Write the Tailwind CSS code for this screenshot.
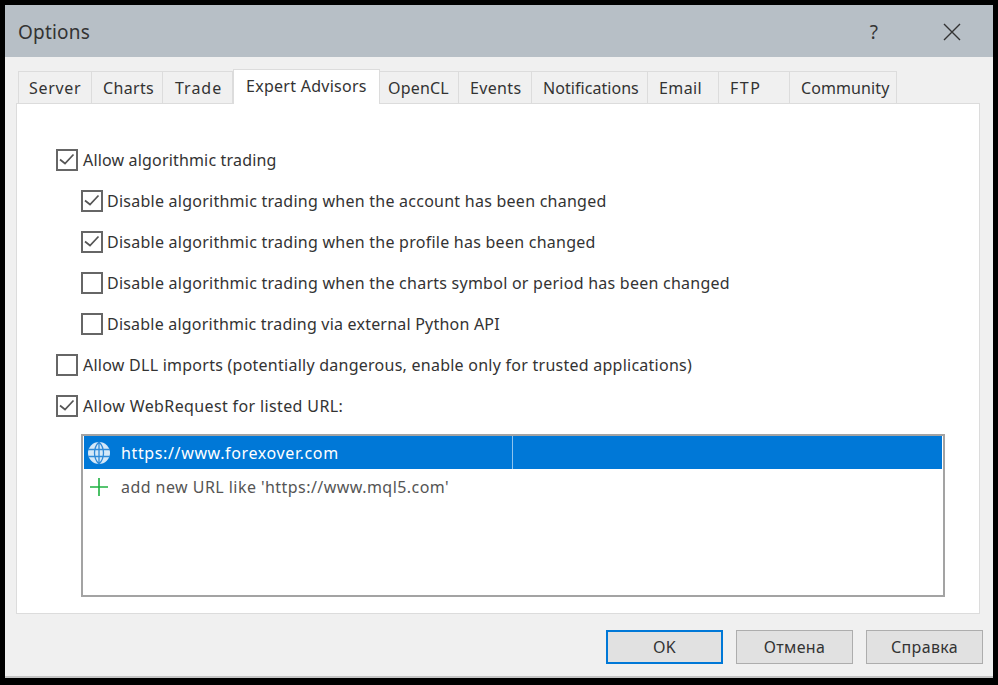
<!DOCTYPE html>
<html><head><meta charset="utf-8"><script src="https://cdn.jsdelivr.net/npm/@tailwindcss/browser@4"></script></head>
<body class="bg-black">
<div class="w-[998px] h-[685px] bg-black pt-[5px] pl-[5px] pr-[5px] pb-[7px] font-['Noto_Sans',sans-serif] text-[16px] leading-[22px] text-[#333] overflow-hidden">
  <div class="w-[988px] h-[673px] bg-[#f0f0f0] border-b-2 border-[#c4c4c4] flex flex-col">
    <div class="h-[52px] shrink-0 bg-[#b7bfc6] flex items-center pl-[13px] pt-[2px] text-[19px] text-[#333] tracking-[0.2px]">
      <span class="grow">Options</span>
      <span class="w-[14px] text-center text-[19px] mr-[62px]">?</span>
      <svg class="mr-[32px]" width="18" height="18" viewBox="0 0 18 18"><path d="M1 1L17 17M17 1L1 17" stroke="#333" stroke-width="1.4" fill="none"/></svg>
    </div>
    <div class="h-[46px] shrink-0 flex items-end pl-[13px] relative z-10">
      <div class="w-[74px] h-[32px] bg-[#f0f0f0] border border-b-0 border-[#dcdcdc] flex items-center pl-[10px] tracking-[0.7px]">Server</div>
      <div class="w-[71px] h-[32px] bg-[#f0f0f0] border border-b-0 border-l-0 border-[#dcdcdc] flex items-center pl-[11px] tracking-[0.35px]">Charts</div>
      <div class="w-[70px] h-[32px] bg-[#f0f0f0] border border-b-0 border-l-0 border-[#dcdcdc] flex items-center pl-[12px] tracking-[1px]">Trade</div>
      <div class="w-[147px] h-[35px] -mb-px bg-white border border-b-0 border-[#dcdcdc] flex items-start pt-[5px] pl-[12px] tracking-[0.27px]">Expert Advisors</div>
      <div class="w-[79px] h-[32px] bg-[#f0f0f0] border border-b-0 border-l-0 border-[#dcdcdc] flex items-center pl-[8px] tracking-[0.2px]">OpenCL</div>
      <div class="w-[73px] h-[32px] bg-[#f0f0f0] border border-b-0 border-l-0 border-[#dcdcdc] flex items-center pl-[11px] tracking-[0.35px]">Events</div>
      <div class="w-[116px] h-[32px] bg-[#f0f0f0] border border-b-0 border-l-0 border-[#dcdcdc] flex items-center pl-[11px] tracking-[0.05px]">Notifications</div>
      <div class="w-[71px] h-[32px] bg-[#f0f0f0] border border-b-0 border-l-0 border-[#dcdcdc] flex items-center pl-[11px] tracking-[0.4px]">Email</div>
      <div class="w-[71px] h-[32px] bg-[#f0f0f0] border border-b-0 border-l-0 border-[#dcdcdc] flex items-center pl-[11px] tracking-[1.5px]">FTP</div>
      <div class="w-[107px] h-[32px] bg-[#f0f0f0] border border-b-0 border-l-0 border-[#dcdcdc] flex items-center pl-[11px] tracking-[0.1px]">Community</div>
    </div>
    <div class="ml-[11px] w-[964px] h-[511px] shrink-0 bg-white border border-[#dcdcdc] pl-[39px] pt-[45px] tracking-[0.25px]">
      <div class="flex flex-col gap-[19px]">
        <label class="flex items-center h-[22px] gap-[5px]">
          <span class="w-[22px] h-[22px] border-2 border-[#666] flex items-center justify-center"><svg width="16" height="14" viewBox="0 0 16 14"><path d="M1 6.5L6 10.5L14.5 1.5" stroke="#555" stroke-width="1.7" fill="none"/></svg></span>
          <span class="tracking-[0.17px]">Allow algorithmic trading</span>
        </label>
        <label class="flex items-center h-[22px] gap-[4px] ml-[25px]">
          <span class="w-[22px] h-[22px] border-2 border-[#666] flex items-center justify-center"><svg width="16" height="14" viewBox="0 0 16 14"><path d="M1 6.5L6 10.5L14.5 1.5" stroke="#555" stroke-width="1.7" fill="none"/></svg></span>
          <span>Disable algorithmic trading when the account has been changed</span>
        </label>
        <label class="flex items-center h-[22px] gap-[4px] ml-[25px]">
          <span class="w-[22px] h-[22px] border-2 border-[#666] flex items-center justify-center"><svg width="16" height="14" viewBox="0 0 16 14"><path d="M1 6.5L6 10.5L14.5 1.5" stroke="#555" stroke-width="1.7" fill="none"/></svg></span>
          <span>Disable algorithmic trading when the profile has been changed</span>
        </label>
        <label class="flex items-center h-[22px] gap-[4px] ml-[25px]">
          <span class="w-[22px] h-[22px] border-2 border-[#666]"></span>
          <span>Disable algorithmic trading when the charts symbol or period has been changed</span>
        </label>
        <label class="flex items-center h-[22px] gap-[4px] ml-[25px]">
          <span class="w-[22px] h-[22px] border-2 border-[#666]"></span>
          <span class="tracking-[0.21px]">Disable algorithmic trading via external Python API</span>
        </label>
        <label class="flex items-center h-[22px] gap-[5px]">
          <span class="w-[22px] h-[22px] border-2 border-[#666]"></span>
          <span>Allow DLL imports (potentially dangerous, enable only for trusted applications)</span>
        </label>
        <label class="flex items-center h-[22px] gap-[5px]">
          <span class="w-[22px] h-[22px] border-2 border-[#666] flex items-center justify-center"><svg width="16" height="14" viewBox="0 0 16 14"><path d="M1 6.5L6 10.5L14.5 1.5" stroke="#555" stroke-width="1.7" fill="none"/></svg></span>
          <span class="tracking-[0.37px]">Allow WebRequest for listed URL:</span>
        </label>
      </div>
      <div class="mt-[17px] ml-[25px] w-[864px] h-[163px] border-2 border-[#a3a3a3] px-px">
        <div class="h-[33px] bg-[#0078d7] text-white flex items-center pl-[3px] tracking-[0.63px]">
          <svg width="24" height="24" viewBox="0 0 24 24" fill="none"><circle cx="12" cy="12" r="11" fill="#d5e8f8"/><path d="M1 8.5H23M1 15.5H23M12 1V23M12 1C6 7 6 17 12 23M12 1C18 7 18 17 12 23" stroke="#2f8ad8" stroke-width="1.3"/></svg>
          <span class="ml-[10px] w-[391px] shrink-0">https://www.forexover.com</span>
          <span class="w-px h-full bg-[#8ec3ee]"></span>
        </div>
        <div class="h-[36px] flex items-center pl-[6px] text-[#555] tracking-[0.45px]">
          <svg width="18" height="18" viewBox="0 0 18 18"><path d="M9 0V18M0 9H18" stroke="#1fb141" stroke-width="1.6"/></svg>
          <span class="ml-[13px]">add new URL like 'https://www.mql5.com'</span>
        </div>
      </div>
    </div>
    <div class="flex justify-end gap-[13px] pt-[16px] pr-[10px] tracking-[0.35px]">
      <button class="w-[117px] h-[34px] bg-[#e1e1e1] border-2 border-[#0078d7]">OK</button>
      <button class="w-[117px] h-[34px] bg-[#e1e1e1] border border-[#adadad]">Отмена</button>
      <button class="w-[117px] h-[34px] bg-[#e1e1e1] border border-[#adadad]">Справка</button>
    </div>
  </div>
</div>
</body></html>
